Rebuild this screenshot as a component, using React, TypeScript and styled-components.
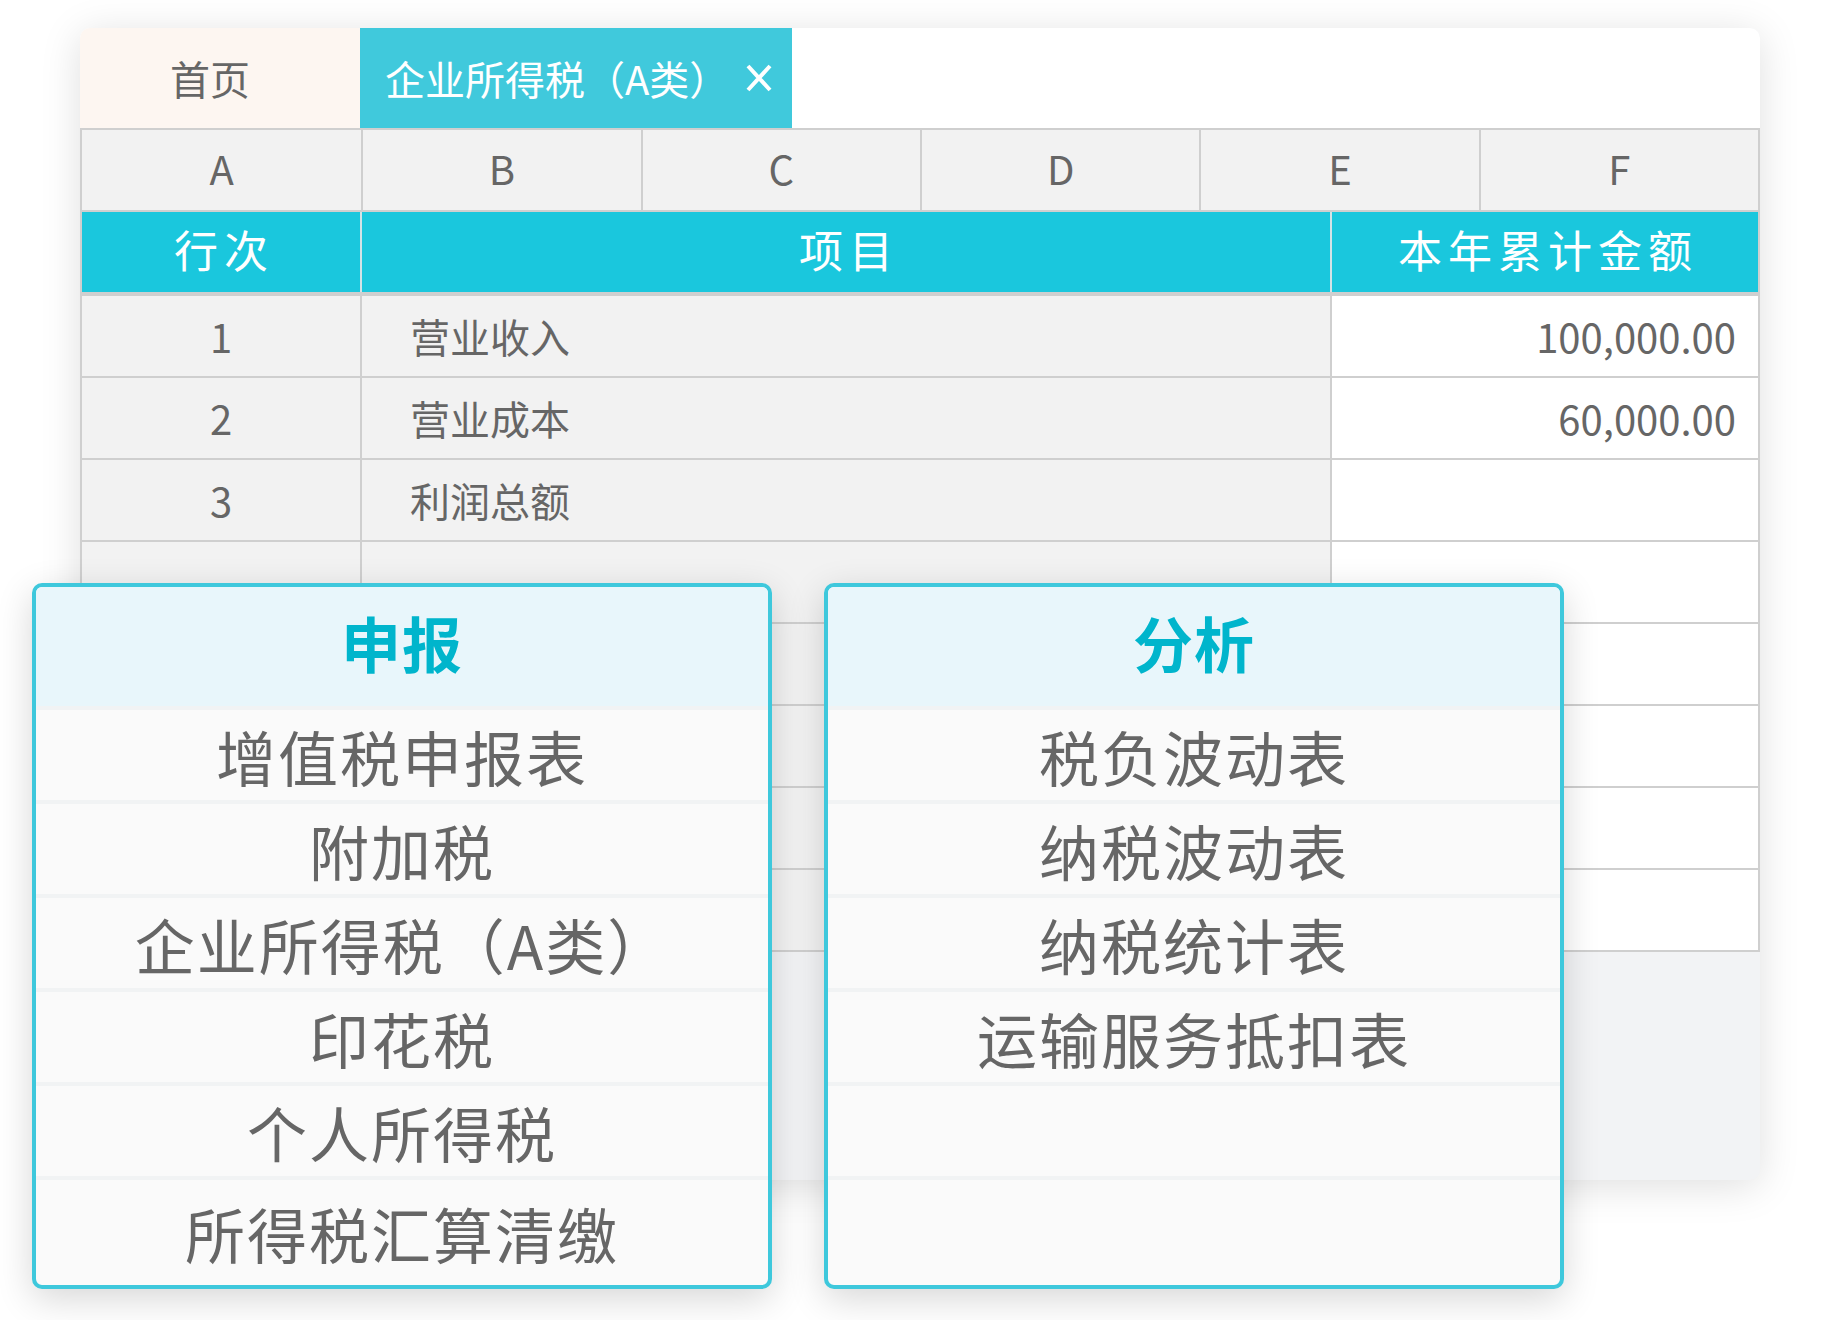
import React from "react";
import styled, { createGlobalStyle } from "styled-components";

const GlobalStyle = createGlobalStyle`
  html, body { margin: 0; padding: 0; background: #ffffff; }
  body { font-family: "Noto Sans CJK SC", "Noto Sans", sans-serif; }
  * { box-sizing: border-box; }
`;

const Page = styled.div`
  width: 1840px;
  height: 1320px;
  padding-top: 28px;
  overflow: hidden;
`;

const Card = styled.div`
  margin-left: 80px;
  width: 1680px;
  height: 1152px;
  border-radius: 10px;
  background: #f2f3f5;
  box-shadow: 0 6px 40px rgba(0, 0, 0, 0.13);
  overflow: hidden;
  display: flex;
  flex-direction: column;
`;

const TabBar = styled.div`
  height: 100px;
  display: flex;
  background: #ffffff;
  font-size: 40px;
`;

const HomeTab = styled.div`
  width: 280px;
  background: #fdf6f1;
  color: #666666;
  display: flex;
  align-items: center;
  padding-left: 90px;
`;

const ActiveTab = styled.div`
  width: 432px;
  background: #40c9dc;
  color: #ffffff;
  display: flex;
  align-items: center;
  justify-content: space-between;
  padding: 0 19px 0 25px;
`;

const Sheet = styled.div`
  border: 2px solid #cfcfcf;
  border-bottom: none;
  color: #666666;
`;

const LetterRow = styled.div`
  display: grid;
  grid-template-columns: repeat(6, 1fr);
  height: 82px;
  background: #f2f2f2;
  border-bottom: 2px solid #cfcfcf;
`;

const LetterCell = styled.div<{ $first?: boolean }>`
  display: flex;
  align-items: center;
  justify-content: center;
  font-size: 40px;
  padding-bottom: 4px;
  border-left: ${(p) => (p.$first ? "none" : "2px solid #cfcfcf")};
`;

const DataGrid = styled.div`
  display: grid;
  grid-template-columns: 278px 970px 1fr;
`;

const HeadRow = styled(DataGrid)`
  height: 84px;
  background: #1ac7dd;
  color: #ffffff;
  border-bottom: 4px solid #cfcfcf;
`;

const HeadCell = styled.div<{ $first?: boolean }>`
  display: flex;
  align-items: center;
  justify-content: center;
  font-size: 44px;
  letter-spacing: 6px;
  padding: 0 0 6px 6px;
  border-left: ${(p) => (p.$first ? "none" : "2px solid #d3e3e6")};
`;

const BodyRow = styled(DataGrid)`
  height: 82px;
  border-bottom: 2px solid #cfcfcf;
`;

const BodyCell = styled.div<{ $align: "center" | "left" | "right"; $white?: boolean; $first?: boolean }>`
  display: flex;
  align-items: center;
  justify-content: ${(p) =>
    p.$align === "center" ? "center" : p.$align === "left" ? "flex-start" : "flex-end"};
  padding: ${(p) => (p.$align === "left" ? "0 0 0 48px" : p.$align === "right" ? "0 22px 0 0" : "0")};
  font-size: 40px;
  background: ${(p) => (p.$white ? "#ffffff" : "#f2f2f2")};
  border-left: ${(p) => (p.$first ? "none" : "2px solid #cfcfcf")};
`;

const PanelRow = styled.div`
  display: flex;
  gap: 52px;
  padding-left: 32px;
  margin-top: -597px;
  position: relative;
`;

const Panel = styled.div`
  width: 740px;
  height: 706px;
  border: 4px solid #3ec8dc;
  border-radius: 10px;
  background: #fafafa;
  box-shadow: 0 10px 36px rgba(0, 0, 0, 0.16);
  overflow: hidden;
  display: flex;
  flex-direction: column;
`;

const PanelHeader = styled.div`
  height: 119px;
  flex: none;
  background: #e8f6fb;
  color: #00b5cc;
  font-size: 60px;
  font-weight: 700;
  display: flex;
  align-items: center;
  justify-content: center;
  letter-spacing: 1px;
  padding-bottom: 10px;
`;

const PanelItem = styled.div<{ $last?: boolean }>`
  height: ${(p) => (p.$last ? "auto" : "94px")};
  flex: ${(p) => (p.$last ? "1" : "none")};
  border-top: 4px solid #f1f3f4;
  display: flex;
  align-items: center;
  justify-content: center;
  font-size: 60px;
  letter-spacing: 2px;
  color: #666666;
`;

const CloseIcon = () => (
  <svg width="28" height="28" viewBox="0 0 28 28" aria-hidden="true">
    <path d="M3 2 L25 26 M25 2 L3 26" stroke="#ffffff" strokeWidth="4" />
  </svg>
);

const letters = ["A", "B", "C", "D", "E", "F"];

const rows: [string, string, string][] = [
  ["1", "营业收入", "100,000.00"],
  ["2", "营业成本", "60,000.00"],
  ["3", "利润总额", ""],
  ["", "", ""],
  ["", "", ""],
  ["", "", ""],
  ["", "", ""],
  ["", "", ""],
];

const declare = ["增值税申报表", "附加税", "企业所得税（A类）", "印花税", "个人所得税", "所得税汇算清缴"];
const analysis = ["税负波动表", "纳税波动表", "纳税统计表", "运输服务抵扣表", "", ""];

export default function App() {
  return (
    <>
      <GlobalStyle />
      <Page>
        <Card>
          <TabBar>
            <HomeTab>首页</HomeTab>
            <ActiveTab>
              <span>企业所得税（A类）</span>
              <CloseIcon />
            </ActiveTab>
          </TabBar>
          <Sheet>
            <LetterRow>
              {letters.map((l, i) => (
                <LetterCell key={l} $first={i === 0}>
                  {l}
                </LetterCell>
              ))}
            </LetterRow>
            <HeadRow>
              <HeadCell $first>行次</HeadCell>
              <HeadCell>项目</HeadCell>
              <HeadCell>本年累计金额</HeadCell>
            </HeadRow>
            {rows.map((r, i) => (
              <BodyRow key={i}>
                <BodyCell $align="center" $first>
                  {r[0]}
                </BodyCell>
                <BodyCell $align="left">{r[1]}</BodyCell>
                <BodyCell $align="right" $white>
                  {r[2]}
                </BodyCell>
              </BodyRow>
            ))}
          </Sheet>
        </Card>
        <PanelRow>
          <Panel>
            <PanelHeader>申报</PanelHeader>
            {declare.map((t, i) => (
              <PanelItem key={i} $last={i === declare.length - 1}>
                {t}
              </PanelItem>
            ))}
          </Panel>
          <Panel>
            <PanelHeader>分析</PanelHeader>
            {analysis.map((t, i) => (
              <PanelItem key={i} $last={i === analysis.length - 1}>
                {t}
              </PanelItem>
            ))}
          </Panel>
        </PanelRow>
      </Page>
    </>
  );
}
